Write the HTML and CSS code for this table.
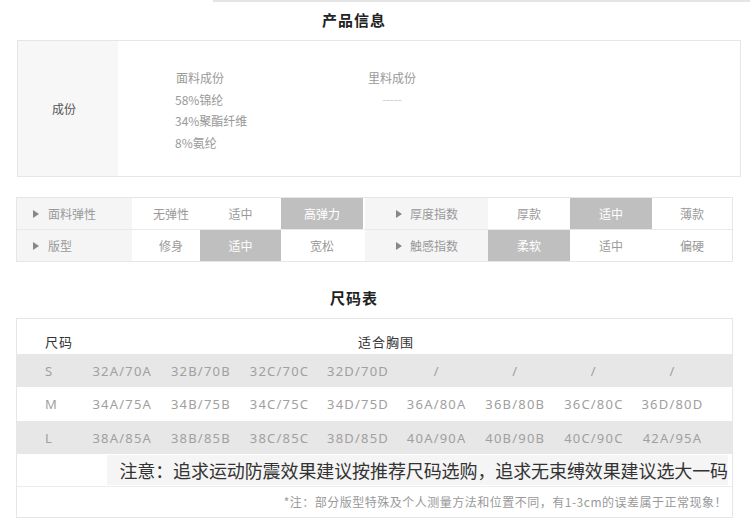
FILE: index.html
```html
<!DOCTYPE html>
<html lang="zh-CN">
<head>
<meta charset="utf-8">
<title>产品信息</title>
<link rel="stylesheet" href="styles.css">
</head>
<body>
<div class="topline"></div>
<h2 class="title t1">产品信息</h2>

<div class="comp">
  <div class="comp-label">成份</div>
  <div class="comp-col c1">
    <div class="indent">面料成份</div>
    <div>58%锦纶</div>
    <div>34%聚酯纤维</div>
    <div>8%氨纶</div>
  </div>
  <div class="comp-col c2">
    <div>里料成份</div>
    <div class="dash">-----</div>
  </div>
</div>

<div class="attr">
  <div class="cell lab">面料弹性</div>
  <div class="cell v1">无弹性</div>
  <div class="cell">适中</div>
  <div class="cell on">高弹力</div>
  <div class="cell lab r">厚度指数</div>
  <div class="cell">厚款</div>
  <div class="cell on">适中</div>
  <div class="cell">薄款</div>

  <div class="cell lab">版型</div>
  <div class="cell v1">修身</div>
  <div class="cell on">适中</div>
  <div class="cell">宽松</div>
  <div class="cell lab r">触感指数</div>
  <div class="cell on">柔软</div>
  <div class="cell">适中</div>
  <div class="cell">偏硬</div>
</div>

<h2 class="title t2">尺码表</h2>

<div class="size">
  <div class="head"><span class="hsz">尺码</span><span class="fit">适合胸围</span></div>
  <div class="row shade r1">
    <span class="sz">S</span><span>32A/70A</span><span>32B/70B</span><span>32C/70C</span><span>32D/70D</span><span>/</span><span>/</span><span>/</span><span>/</span>
  </div>
  <div class="row r2">
    <span class="sz">M</span><span>34A/75A</span><span>34B/75B</span><span>34C/75C</span><span>34D/75D</span><span>36A/80A</span><span>36B/80B</span><span>36C/80C</span><span>36D/80D</span>
  </div>
  <div class="row shade r3">
    <span class="sz">L</span><span>38A/85A</span><span>38B/85B</span><span>38C/85C</span><span>38D/85D</span><span>40A/90A</span><span>40B/90B</span><span>40C/90C</span><span>42A/95A</span>
  </div>
  <div class="notice"><span class="band">注意：追求运动防震效果建议按推荐尺码选购，追求无束缚效果建议选大一码</span></div>
  <div class="foot">*注：部分版型特殊及个人测量方法和位置不同，有1-3cm的误差属于正常现象！</div>
</div>
</body>
</html>
```

FILE: styles.css
```css
body {
  margin: 0;
  width: 750px;
  background: #fff;
  font-family: "Noto Sans CJK SC", "Noto Sans", sans-serif;
}

.topline {
  margin-left: 213px;
  height: 2px;
  background: #e4e4e4;
}

.title {
  margin: 0;
  padding-right: 42px;
  text-align: center;
  font-size: 15px;
  line-height: 20px;
  font-weight: bold;
  letter-spacing: 1px;
  color: #222;
}

.t1 { margin-top: 8px; }

/* composition card */
.comp {
  margin-top: 10px;
  margin-left: 17px;
  width: 724px;
  height: 137px;
  box-sizing: border-box;
  border: 1px solid #e6e6e6;
  display: flex;
}

.comp-label {
  width: 100px;
  box-sizing: border-box;
  padding-left: 34px;
  background: #f7f7f7;
  display: flex;
  align-items: center;
  font-size: 12px;
  color: #555;
}

.comp-col {
  padding-top: 26px;
  font-size: 12px;
  line-height: 21.5px;
  color: #999;
}

.c1 {
  margin-left: 57px;
  width: 193px;
}

.indent { padding-left: 1px; }

.c2 {
  width: 48px;
  text-align: center;
}

.dash {
  color: #c4c4c4;
  font-size: 11px;
}

/* attribute table */
.attr {
  margin-top: 20px;
  margin-left: 16px;
  width: 717px;
  box-sizing: border-box;
  border: 1px solid #e6e6e6;
  display: grid;
  grid-template-columns: 115px 68px 81px 82px 125px 82px 82px 80px;
}

.cell {
  height: 31px;
  display: flex;
  align-items: center;
  justify-content: center;
  font-size: 12px;
  color: #999;
}

.cell:nth-child(-n+8) {
  border-bottom: 1px solid #e9e9e9;
}

.v1 { padding-left: 10px; }

.lab {
  justify-content: flex-start;
  padding-left: 16px;
  background: #f5f5f5;
}

.lab::before {
  content: "";
  width: 0;
  height: 0;
  border-left: 6px solid #888;
  border-top: 4.5px solid transparent;
  border-bottom: 4.5px solid transparent;
  margin-right: 9px;
}

.lab.r {
  padding-left: 31px;
  border-left: 2px solid #fff;
}

.lab.r::before { margin-right: 8px; }

.on {
  background: #bfbfbf;
  color: #fff;
}

/* size chart */
.t2 { margin-top: 26px; }

.size {
  margin-top: 10px;
  margin-left: 16px;
  width: 717px;
  box-sizing: border-box;
  border: 1px solid #e6e6e6;
  box-shadow: 0 1px 1px rgba(0, 0, 0, 0.04);
}

.head {
  height: 35px;
  box-sizing: border-box;
  padding-top: 14px;
  line-height: 18px;
  display: flex;
  font-size: 13px;
  letter-spacing: 1px;
  color: #333;
}

.hsz {
  width: 66px;
  box-sizing: border-box;
  padding-left: 28px;
}

.fit { margin-left: 275px; }

.row {
  display: grid;
  grid-template-columns: 66px repeat(8, 78.6px) 1fr;
  align-items: center;
  font-family: "Noto Sans", "Noto Sans CJK SC", sans-serif;
  font-size: 13px;
  letter-spacing: 1.2px;
  color: #a0a0a0;
  text-align: center;
}

.r1 { height: 33px; }
.r2 { height: 34px; }
.r3 { height: 33px; }

.row .sz {
  text-align: left;
  padding-left: 28px;
}

.shade { background: #e7e7e7; }

.notice {
  height: 32px;
  box-sizing: border-box;
  padding-top: 1px;
  padding-right: 4px;
  display: flex;
  justify-content: flex-end;
}

.band {
  height: 30px;
  line-height: 30px;
  padding-left: 12px;
  background: #f5f5f5;
  font-size: 18px;
  letter-spacing: -0.1px;
  color: #333;
  white-space: nowrap;
}

.foot {
  height: 30px;
  line-height: 30px;
  border-top: 1px solid #ececec;
  text-align: right;
  padding-right: 5px;
  font-size: 12px;
  letter-spacing: 0.5px;
  color: #999;
  white-space: nowrap;
}
```
